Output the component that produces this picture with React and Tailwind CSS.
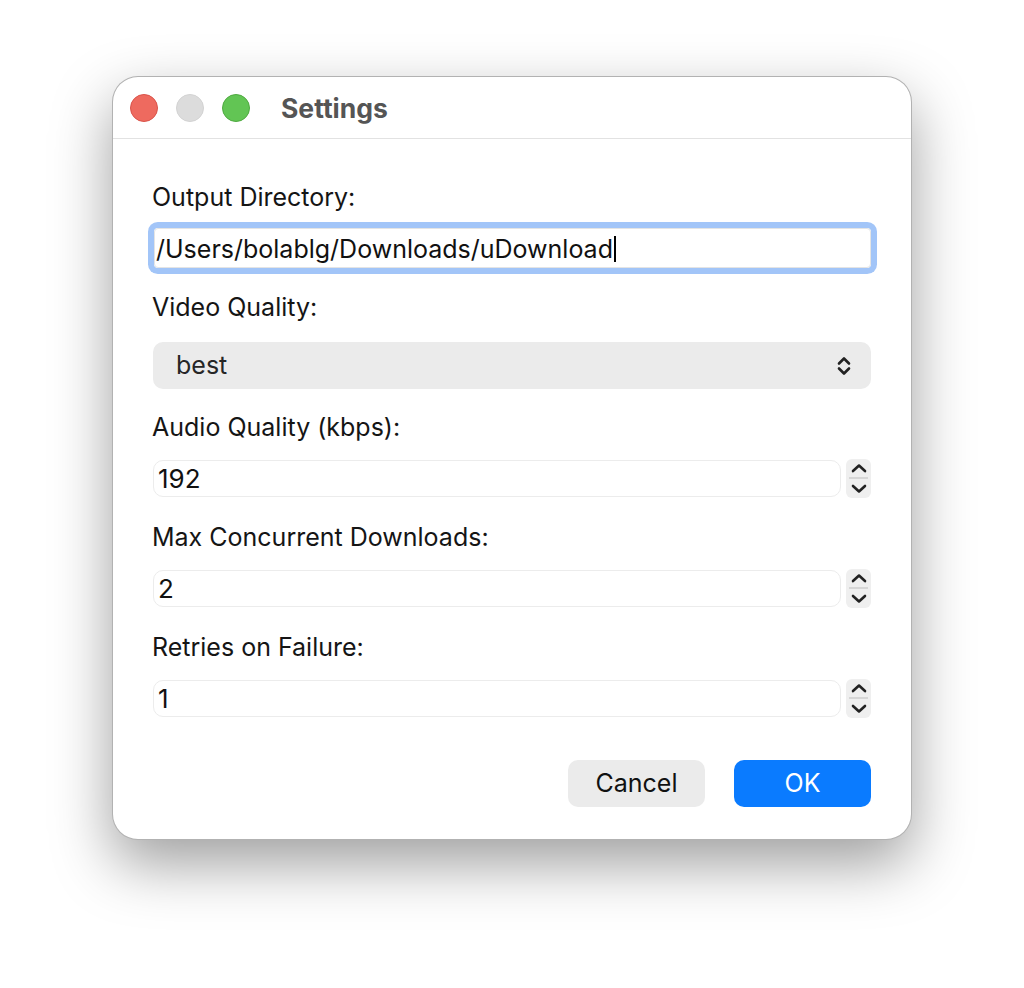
import { useState } from "react";

// Small chevron pair used by the select and the steppers
function UpDown({ className }) {
  return (
    <svg viewBox="0 0 14 22" className={className} fill="none" stroke="#222" strokeWidth="2.6" strokeLinecap="round" strokeLinejoin="round">
      <path d="M2 8.5 L7 3.5 L12 8.5" />
      <path d="M2 13.5 L7 18.5 L12 13.5" />
    </svg>
  );
}

function Stepper() {
  return (
    <div className="flex h-[39px] w-[25px] shrink-0 flex-col items-center rounded-[6px] bg-[#efefef]">
      <svg viewBox="0 0 16 10" className="mt-[4px] h-[10px] w-[16px]" fill="none" stroke="#222" strokeWidth="2.6" strokeLinecap="round" strokeLinejoin="round">
        <path d="M2 8 L8 2.5 L14 8" />
      </svg>
      <div className="mt-[4px] h-[2px] w-[19px] bg-[#d6d6d6]" />
      <svg viewBox="0 0 16 10" className="mt-[5px] h-[10px] w-[16px]" fill="none" stroke="#222" strokeWidth="2.6" strokeLinecap="round" strokeLinejoin="round">
        <path d="M2 2 L8 7.5 L14 2" />
      </svg>
    </div>
  );
}

function Label({ children, className = "" }) {
  return (
    <div className={"-ml-[1px] h-[30px] text-[25px] leading-[30px] text-[#151515] " + className}>
      {children}
    </div>
  );
}

function NumberField({ value, className = "" }) {
  return (
    <div className={"flex h-[39px] items-center gap-[5px] " + className}>
      <div className="flex h-[37px] flex-1 items-center rounded-[10px] border border-[#ececec] pl-[4px] text-[26px] text-[#111]">
        {value}
      </div>
      <Stepper />
    </div>
  );
}

export default function App() {
  const [dir] = useState("/Users/bolablg/Downloads/uDownload");

  return (
    <div className="min-h-[988px] bg-white pl-[112px] pt-[76px] font-['Inter','Liberation_Sans',sans-serif]">
      <div className="flex h-[764px] w-[800px] flex-col overflow-hidden rounded-[26px] border border-black/30 bg-white shadow-[0_24px_60px_rgba(0,0,0,0.38)]">
        {/* Title bar */}
        <div className="flex h-[62px] shrink-0 items-center border-b border-[#e2e2e2] pl-[17px]">
          <div className="flex gap-[18px]">
            <span className="h-[28px] w-[28px] rounded-full border border-[#d9534a] bg-[#ee6a5f]" />
            <span className="h-[28px] w-[28px] rounded-full border border-[#d2d2d2] bg-[#dcdcdc]" />
            <span className="h-[28px] w-[28px] rounded-full border border-[#4fa940] bg-[#62c554]" />
          </div>
          <h1 className="ml-[31px] mt-[2px] text-[26.5px] font-bold text-[#555555]">Settings</h1>
        </div>

        {/* Form */}
        <div className="flex flex-1 flex-col px-[40px]">
          <Label className="mt-[43px]">Output Directory:</Label>
          <div className="mt-[16px] ml-[1px] flex h-[40px] items-center rounded-[4px] border border-[#e4e4e4] pl-[1px] pt-[3px] text-[25px] text-[#111] shadow-[0_0_0_6px_#a2c5f8]">
            <span>{dir}</span>
            <span className="-mt-[2px] ml-[1px] h-[26px] w-[2px] bg-black" />
          </div>

          <Label className="mt-[24px]">Video Quality:</Label>
          <div className="mt-[20px] flex h-[47px] items-center justify-between rounded-[10px] bg-[#ebebeb] pl-[23px] pr-[20px] text-[25px] text-[#262626]">
            <span>best</span>
            <UpDown className="h-[22px] w-[14px]" />
          </div>

          <Label className="mt-[23px]">Audio Quality (kbps):</Label>
          <NumberField value="192" className="mt-[17px]" />

          <Label className="mt-[24px]">Max Concurrent Downloads:</Label>
          <NumberField value="2" className="mt-[17px]" />

          <Label className="mt-[24px]">Retries on Failure:</Label>
          <NumberField value="1" className="mt-[17px]" />

          <div className="mt-[42px] flex justify-end gap-[29px]">
            <button className="h-[47px] w-[137px] rounded-[10px] bg-[#ebebeb] text-[25px] text-[#111]">
              Cancel
            </button>
            <button className="h-[47px] w-[137px] rounded-[10px] bg-[#0a7bff] text-[25px] text-white">
              OK
            </button>
          </div>
        </div>
      </div>
    </div>
  );
}
